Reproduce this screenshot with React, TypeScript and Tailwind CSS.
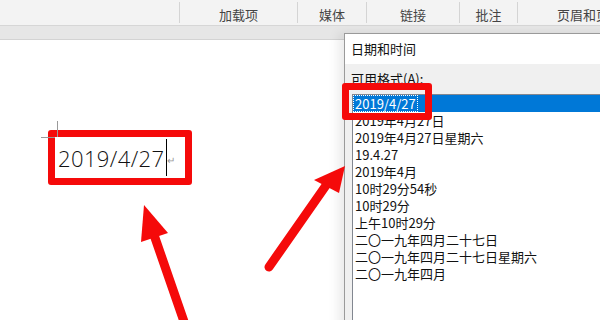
export default function App() {
  const cjk = { fontFamily: '"Noto Sans CJK SC", "Noto Sans", sans-serif' };
  const rows = [
    "2019年4月27日",
    "2019年4月27日星期六",
    "19.4.27",
    "2019年4月",
    "10时29分54秒",
    "10时29分",
    "上午10时29分",
    "二〇一九年四月二十七日",
    "二〇一九年四月二十七日星期六",
    "二〇一九年四月",
  ];
  return (
    <div className="relative w-[600px] h-[320px] overflow-hidden bg-white" style={cjk}>
      {/* ribbon */}
      <div className="flex h-[26px] bg-[#f3f3f3] border-b border-[#d6d6d6] text-[13px] text-[#444] leading-none">
        <div className="w-[180px] my-[2px] border-r border-[#d4d4d4]" />
        <div className="w-[118px] my-[2px] border-r border-[#d4d4d4] flex items-center justify-center pt-[3px]">加载项</div>
        <div className="w-[69px] my-[2px] border-r border-[#d4d4d4] flex items-center justify-center pt-[3px]">媒体</div>
        <div className="w-[93px] my-[2px] border-r border-[#d4d4d4] flex items-center justify-center pt-[3px]">链接</div>
        <div className="w-[58px] my-[2px] border-r border-[#d4d4d4] flex items-center justify-center pt-[3px]">批注</div>
        <div className="flex-1 flex items-center pl-[39px] pt-[3px] whitespace-nowrap overflow-hidden">页眉和页脚</div>
      </div>
      {/* gray band */}
      <div className="h-[14px] bg-[#e6e6e6] border-b border-[#d3d3d3]" />
      {/* document */}
      <div className="pl-[48px] pt-[90px]">
        <div className="relative inline-flex h-[55px] w-[144px] border-[7px] border-[#f50a0a] rounded-[3px] items-center pl-[3px]">
          <div className="absolute left-[2px] top-[-16px] w-px h-[16px] bg-[#9a9a9a]" />
          <div className="absolute left-[-14px] top-0 h-px w-[14px] bg-[#9a9a9a]" />
          <span
            className="text-[22px] font-light text-[#111] leading-none tracking-[0.4px]"
            style={{ fontFamily: '"Open Sans", sans-serif' }}
          >
            2019/4/27
          </span>
          <span className="w-px h-[37px] bg-black ml-[1px]" />
          <span className="text-[10px] text-[#999] leading-none mt-[4px]">↵</span>
        </div>
      </div>
      {/* dialog */}
      <div className="absolute left-[344px] top-[33px] w-[270px] h-[300px] border border-[#9a9a9a] bg-[#f0f0f0] shadow-[-6px_0_10px_rgba(0,0,0,0.08)] flex flex-col">
        <div className="h-[30px] bg-white flex items-center pl-[6px] text-[13px] text-[#111]">日期和时间</div>
        <div className="pl-[6px] pt-[8px] h-[30px] text-[13px] text-[#111] leading-none">可用格式(A):</div>
        <div className="ml-[7px] flex-1 border border-[#828790] bg-white text-[13px] text-[#111]">
          <div className="h-[17px] bg-[#0078d7] text-white flex items-center pl-[1px] overflow-hidden">
            <span className="outline-1 outline-dotted outline-[#ffffff] px-[1px] leading-[15px]">2019/4/27</span>
          </div>
          {rows.map((r) => (
            <div key={r} className="h-[17px] leading-[17px] pl-[2px] whitespace-nowrap overflow-hidden">
              {r}
            </div>
          ))}
        </div>
      </div>
      {/* red box on list */}
      <div className="absolute left-[342px] top-[83px] w-[90px] h-[37px] border-[7px] border-[#f50a0a] rounded-[3px]" />
      {/* arrows */}
      <svg className="absolute inset-0" width="600" height="320" viewBox="0 0 600 320">
        <line x1="189" y1="336" x2="153" y2="232" stroke="#f50a0a" strokeWidth="9" strokeLinecap="round" />
        <polygon points="144,205 141,242 168,233" fill="#f50a0a" />
        <line x1="269" y1="267" x2="327" y2="184" stroke="#f50a0a" strokeWidth="9" strokeLinecap="round" />
        <polygon points="345,166 314,180 339,193" fill="#f50a0a" />
      </svg>
    </div>
  );
}
